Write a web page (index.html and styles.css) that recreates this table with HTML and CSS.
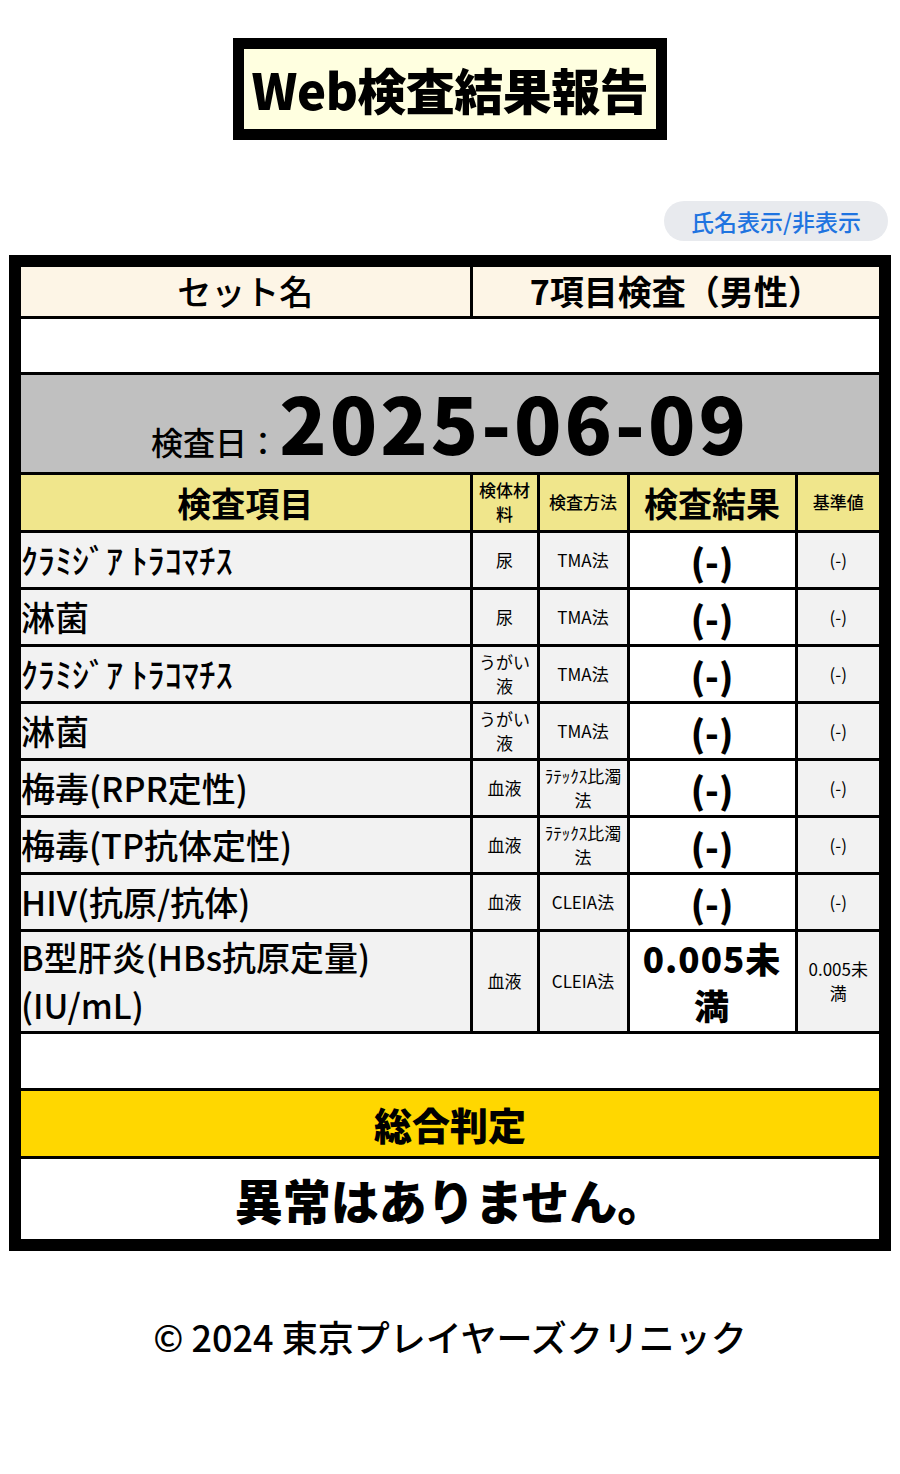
FILE: index.html
```html
<!DOCTYPE html>
<html lang="ja">
<head>
<meta charset="utf-8">
<title>Web検査結果報告</title>
<link rel="stylesheet" href="styles.css">
</head>
<body>
<header class="head">
  <h1 class="title">Web検査結果報告</h1>
</header>
<div class="toggle-row">
  <button class="toggle">氏名表示/非表示</button>
</div>
<div class="report">
  <table class="grid">
    <colgroup>
      <col class="c1"><col class="c2"><col class="c3"><col class="c4"><col class="c5">
    </colgroup>
    <tr class="r-set">
      <td class="set-label">セット名</td>
      <td class="set-value" colspan="4">7項目検査（男性）</td>
    </tr>
    <tr class="r-blank"><td colspan="5"></td></tr>
    <tr class="r-date">
      <td colspan="5"><span class="date-label">検査日：</span><span class="date-value">2025-06-09</span></td>
    </tr>
    <tr class="r-head">
      <td class="h-big">検査項目</td>
      <td class="h-small">検体材料</td>
      <td class="h-small">検査方法</td>
      <td class="h-big">検査結果</td>
      <td class="h-small">基準値</td>
    </tr>
    <tr class="r-data">
      <td class="name">ｸﾗﾐｼﾞｱ ﾄﾗｺﾏﾁｽ</td><td class="small">尿</td><td class="small">TMA法</td><td class="result">(-)</td><td class="small">(-)</td>
    </tr>
    <tr class="r-data">
      <td class="name">淋菌</td><td class="small">尿</td><td class="small">TMA法</td><td class="result">(-)</td><td class="small">(-)</td>
    </tr>
    <tr class="r-data">
      <td class="name">ｸﾗﾐｼﾞｱ ﾄﾗｺﾏﾁｽ</td><td class="small">うがい液</td><td class="small">TMA法</td><td class="result">(-)</td><td class="small">(-)</td>
    </tr>
    <tr class="r-data">
      <td class="name">淋菌</td><td class="small">うがい液</td><td class="small">TMA法</td><td class="result">(-)</td><td class="small">(-)</td>
    </tr>
    <tr class="r-data">
      <td class="name">梅毒(RPR定性)</td><td class="small">血液</td><td class="small">ﾗﾃｯｸｽ比濁法</td><td class="result">(-)</td><td class="small">(-)</td>
    </tr>
    <tr class="r-data">
      <td class="name">梅毒(TP抗体定性)</td><td class="small">血液</td><td class="small">ﾗﾃｯｸｽ比濁法</td><td class="result">(-)</td><td class="small">(-)</td>
    </tr>
    <tr class="r-data">
      <td class="name">HIV(抗原/抗体)</td><td class="small">血液</td><td class="small">CLEIA法</td><td class="result">(-)</td><td class="small">(-)</td>
    </tr>
    <tr class="r-data r-tall">
      <td class="name">B型肝炎(HBs抗原定量)(IU/mL)</td><td class="small">血液</td><td class="small">CLEIA法</td><td class="result result-num">0.005未満</td><td class="small">0.005未満</td>
    </tr>
    <tr class="r-blank2"><td colspan="5"></td></tr>
    <tr class="r-judge"><td colspan="5">総合判定</td></tr>
    <tr class="r-verdict"><td colspan="5">異常はありません。</td></tr>
  </table>
</div>
<footer class="foot">© 2024 東京プレイヤーズクリニック</footer>
</body>
</html>
```
FILE: styles.css
```css
* { box-sizing: border-box; }
html, body {
  margin: 0;
  padding: 0;
  background: #fff;
  color: #000;
  font-family: "Noto Sans CJK JP", "Noto Sans", sans-serif;
}
.head {
  padding-top: 38px;
  text-align: center;
}
.title {
  display: inline-block;
  margin: 0;
  border: 11px solid #000;
  background: #ffffe0;
  font-size: 49px;
  font-weight: 900;
  line-height: 80px;
  padding: 0 8px;
  letter-spacing: -0.5px;
}
.toggle-row {
  display: flex;
  justify-content: flex-end;
  padding: 61px 12px 0 0;
}
.toggle {
  border: none;
  background: #e8eaee;
  color: #1f74e0;
  font-family: "Noto Sans CJK JP", sans-serif;
  font-size: 23px;
  font-weight: 500;
  height: 40px;
  line-height: 40px;
  padding: 0 27px;
  border-radius: 20px;
}
.report {
  margin: 14px 9px 0;
  border: 12px solid #000;
}
.grid {
  width: 100%;
  table-layout: fixed;
  border-collapse: collapse;
  border-style: hidden;
}
.grid td {
  border: 3px solid #000;
  padding: 0;
  text-align: center;
  vertical-align: middle;
  background: #f2f2f2;
}
.c1 { width: 450px; }
.c2 { width: 67px; }
.c3 { width: 90px; }
.c4 { width: 168px; }
.c5 { width: 83px; }

.r-set td {
  height: 50px;
  background: #fdf5e6;
  font-size: 34px;
  line-height: 1.2;
}
.set-label { font-weight: 500; }
.set-value { font-weight: 700; }
.r-blank td { height: 56px; background: #fff; }
.r-date td {
  height: 100px;
  background: #c0c0c0;
  padding-top: 0;
}
.date-label {
  font-size: 32px;
  font-weight: 500;
}
.date-value {
  font-size: 78px;
  font-weight: 900;
  line-height: 1;
  letter-spacing: 3px;
}
.r-head td {
  height: 58px;
  background: #f0e68c;
}
.h-big {
  font-size: 34px;
  font-weight: 700;
}
.grid td.h-small {
  font-size: 17px;
  font-weight: 500;
  line-height: 1.4;
  padding: 0 4px;
}
.r-data td { height: 57px; }
.r-tall td { height: 102px; }
.grid td.name {
  text-align: left;
  font-size: 34px;
  font-weight: 500;
  line-height: 1.4;
  padding-right: 50px;
}
.grid td.small {
  font-size: 17px;
  font-weight: 400;
  line-height: 1.4;
  padding: 0 4px;
}
.grid td.result {
  background: #fff;
  font-size: 36px;
  font-weight: 900;
}
.grid td.result-num {
  font-size: 35px;
  line-height: 1.35;
  padding: 0 8px;
  letter-spacing: 1px;
}
.r-blank2 td { height: 57px; background: #fff; }
.grid .r-judge td {
  height: 68px;
  background: #ffd700;
  font-size: 38px;
  font-weight: 900;
}
.grid .r-verdict td {
  height: 82px;
  background: #fff;
  font-size: 48px;
  font-weight: 900;
}
.foot {
  margin-top: 65px;
  text-align: center;
  font-size: 36px;
  font-weight: 500;
  line-height: 40px;
}
```
